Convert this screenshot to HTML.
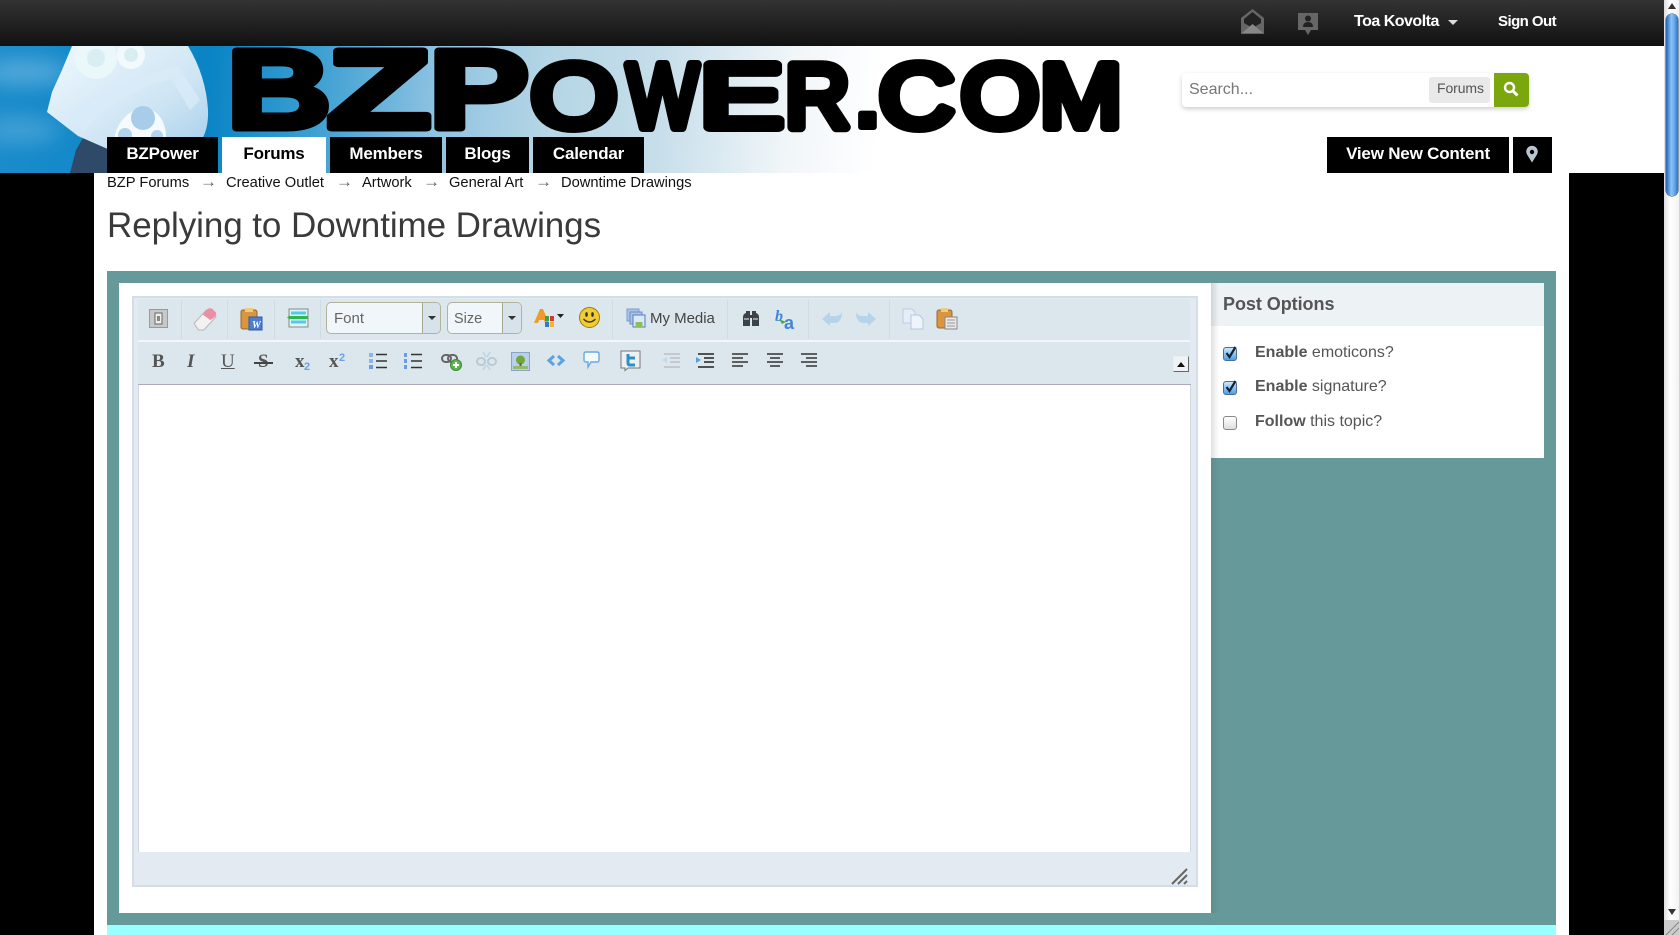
<!DOCTYPE html>
<html><head><meta charset="utf-8"><title>Replying to Downtime Drawings</title>
<style>
html,body{margin:0;padding:0;width:1679px;height:935px;overflow:hidden;background:#fff;font-family:"Liberation Sans",Arial,sans-serif}
.a{position:absolute}
.t{position:absolute;white-space:nowrap}
.tab{position:absolute;top:137px;height:36px;line-height:33px;background:#000;color:#fff;text-align:center;font-size:17px;font-weight:bold;letter-spacing:-.2px}
.sep{position:absolute;top:300px;width:1px;height:39px;background:#d0dbe3}
.ic{position:absolute;overflow:visible}
.cr{position:absolute;top:175px;font-size:14.7px;line-height:17px;color:#111;white-space:nowrap}
.ar{position:absolute;top:173px;font-size:17px;line-height:17px;color:#666;white-space:nowrap}
.fm{position:absolute;font-weight:bold;font-family:"Liberation Serif",serif;color:#555}
.cb{position:absolute;left:1223px;width:14px;height:14px;border-radius:3px;box-sizing:border-box}
.on{background:linear-gradient(#cfe6fb,#4d9ee8);border:1px solid #4a6f96}
.off{background:linear-gradient(#fff,#ddd);border:1px solid #888}
.o{position:absolute;left:1255px;font-size:16px;line-height:20px;color:#555;white-space:nowrap}
</style></head>
<body>
<div class="a" style="left:0;top:0;width:1664px;height:46px;background:linear-gradient(#333,#111)"></div>

<div class="a" style="left:0;top:46px;width:1664px;height:127px;background:#fff"></div>
<svg class="a" style="left:0;top:46px" width="1140" height="127" viewBox="0 46 1140 127">
<defs>
<linearGradient id="bn" gradientUnits="userSpaceOnUse" x1="0" y1="46" x2="880" y2="110"><stop offset="0" stop-color="#1b8ccb"/><stop offset=".24" stop-color="#0a84c5"/><stop offset=".36" stop-color="#3c9fd2"/><stop offset=".5" stop-color="#8fc3e2"/><stop offset=".62" stop-color="#b4d5e5"/><stop offset=".75" stop-color="#c6deea"/><stop offset=".9" stop-color="#f1f6f9"/><stop offset="1" stop-color="#fff"/></linearGradient>
<linearGradient id="hm" x1="0" y1="0" x2="1" y2="1"><stop offset="0" stop-color="#eef8fd"/><stop offset=".6" stop-color="#cfe5f4"/><stop offset="1" stop-color="#a4cdea"/></linearGradient>
<filter id="bl" x="-50%" y="-100%" width="200%" height="300%"><feGaussianBlur stdDeviation="10"/></filter>
</defs>
<rect x="0" y="46" width="1000" height="127" fill="url(#bn)"/>
<ellipse cx="25" cy="72" rx="45" ry="12" fill="#7fc0e6" opacity=".6" filter="url(#bl)"/>
<ellipse cx="20" cy="130" rx="40" ry="12" fill="#6fb8e2" opacity=".5" filter="url(#bl)"/>
<path d="M70 173L76 150 84 136 107 130 125 145 107 173Z" fill="#2f4a68"/>
<path d="M72 46H188Q206 76 208 110 209 135 195 148L160 158 110 150 78 136 47 112 52 92 62 70Z" fill="url(#hm)"/>
<path d="M60 112L84 132 100 112 150 84 172 80 190 110 200 100 178 66 135 78 94 96Z" fill="#d8ebf7" opacity=".8"/>
<circle cx="96" cy="58" r="21" fill="#eaf7fb"/><circle cx="96" cy="58" r="9" fill="#d8eef3"/>
<circle cx="131" cy="55" r="14" fill="#f2fafd"/><circle cx="131" cy="55" r="7" fill="#d8eef3"/>
<path d="M115 135Q120 115 140 108 160 108 165 128 170 150 150 155L125 155Q112 150 115 135Z" fill="#f4fafe"/>
<circle cx="143" cy="118" r="12" fill="#a8cdea"/><circle cx="125" cy="135" r="7" fill="#b4d4ec"/><circle cx="157" cy="136" r="6" fill="#b4d4ec"/>
<g font-family="'Liberation Sans',sans-serif" font-weight="bold" fill="#000" stroke="#000" stroke-width="7" stroke-linejoin="round">
<text x="227" y="128" font-size="112" textLength="104" lengthAdjust="spacingAndGlyphs">B</text>
<text x="327" y="128" font-size="112" textLength="104" lengthAdjust="spacingAndGlyphs">Z</text>
<text x="429" y="128" font-size="112" textLength="100" lengthAdjust="spacingAndGlyphs">P</text>
</g>
<g font-family="'Liberation Sans',sans-serif" fill="#000" stroke="#000" stroke-width="10" stroke-linejoin="round">
<text x="531" y="127" font-size="90" textLength="86" lengthAdjust="spacingAndGlyphs">O</text>
<text x="627" y="127" font-size="90" textLength="71" lengthAdjust="spacingAndGlyphs">W</text>
<text x="700" y="127" font-size="90" textLength="83" lengthAdjust="spacingAndGlyphs">E</text>
<text x="785" y="127" font-size="90" textLength="65" lengthAdjust="spacingAndGlyphs">R</text>
<text x="855" y="127" font-size="90" font-weight="bold" stroke-width="6">.</text>
<text x="879" y="127" font-size="90" textLength="75" lengthAdjust="spacingAndGlyphs">C</text>
<text x="961" y="127" font-size="90" textLength="78" lengthAdjust="spacingAndGlyphs">O</text>
<text x="1040" y="127" font-size="90" textLength="82" lengthAdjust="spacingAndGlyphs">M</text>
</g>
</svg>

<!-- page columns -->
<div class="a" style="left:0;top:173px;width:94px;height:762px;background:#000"></div>
<div class="a" style="left:1569px;top:173px;width:95px;height:762px;background:#000"></div>

<!-- top bar right -->
<svg class="ic" style="left:1240px;top:9px" width="25" height="26" viewBox="0 0 25 26"><path d="M12.5 0L24 9V25H1V9Z" fill="#666"/><path d="M4 10L12.5 3 21 10V14L12.5 19 4 14Z" fill="#222"/><path d="M2 24L12.5 15 23 24Z" fill="#888"/></svg>
<svg class="ic" style="left:1297px;top:12px" width="22" height="24" viewBox="0 0 22 24"><path d="M1 1H21V18H14L11 23 8 18H1Z" fill="#666"/><circle cx="11" cy="6.5" r="3" fill="#222"/><path d="M6 15Q6 10 11 10 16 10 16 15Z" fill="#222"/></svg>
<div class="t" style="left:1354px;top:12px;font-size:16px;line-height:19px;color:#fff;font-weight:bold;letter-spacing:-.5px">Toa Kovolta</div>
<div class="a" style="left:1448px;top:20px;border:5px solid transparent;border-top-color:#ddd;border-bottom:0"></div>
<div class="t" style="left:1498px;top:12px;font-size:15px;line-height:19px;color:#fff;font-weight:bold;letter-spacing:-.55px">Sign Out</div>

<!-- search -->
<div class="a" style="left:1182px;top:73px;width:347px;height:34px;background:#fff;border-radius:4px;box-shadow:0 2px 5px rgba(0,0,0,.2)"></div>
<div class="t" style="left:1189px;top:81px;font-size:16px;line-height:18px;color:#777">Search...</div>
<div class="a" style="left:1429px;top:77px;width:61px;height:26px;background:#e9e9e9;border-radius:3px"></div>
<div class="t" style="left:1437px;top:80px;font-size:14px;line-height:17px;color:#555;letter-spacing:-.1px">Forums</div>
<div class="a" style="left:1494px;top:73px;width:35px;height:34px;background:#7ba60d;border-radius:0 4px 4px 0"></div>
<svg class="ic" style="left:1503px;top:81px" width="16" height="16" viewBox="0 0 16 16"><circle cx="6.5" cy="6.5" r="4.5" fill="none" stroke="#fff" stroke-width="2.4"/><path d="M10 10L14.5 14.5" stroke="#fff" stroke-width="3"/></svg>

<!-- nav -->
<div class="tab" style="left:107px;width:111px">BZPower</div>
<div class="tab" style="left:222px;width:104px;background:#fff;color:#000">Forums</div>
<div class="tab" style="left:330px;width:112px">Members</div>
<div class="tab" style="left:446px;width:83px">Blogs</div>
<div class="tab" style="left:533px;width:111px">Calendar</div>
<div class="tab" style="left:1327px;width:182px">View New Content</div>
<div class="tab" style="left:1513px;width:39px"></div>
<svg class="ic" style="left:1525px;top:146px" width="14" height="17" viewBox="0 0 14 17"><path d="M7 16.5L2 8.5A5.8 5.8 0 1 1 12 8.5Z" fill="#b9c6d0"/><circle cx="7" cy="6" r="2.2" fill="#000"/></svg>

<!-- breadcrumb -->
<div class="cr" style="left:107px">BZP Forums</div>
<div class="ar" style="left:200px">→</div>
<div class="cr" style="left:226px">Creative Outlet</div>
<div class="ar" style="left:336px">→</div>
<div class="cr" style="left:362px">Artwork</div>
<div class="ar" style="left:423px">→</div>
<div class="cr" style="left:449px">General Art</div>
<div class="ar" style="left:535px">→</div>
<div class="cr" style="left:561px">Downtime Drawings</div>

<div class="t" style="left:107px;top:205px;font-size:35px;line-height:42px;color:#3a3a3a;letter-spacing:-.07px">Replying to Downtime Drawings</div>

<!-- teal -->
<div class="a" style="left:107px;top:271px;width:1449px;height:654px;background:#669999"></div>
<div class="a" style="left:107px;top:925px;width:1449px;height:10px;background:#99ffff"></div>
<div class="a" style="left:119px;top:283px;width:1092px;height:630px;background:#fff"></div>
<div class="a" style="left:1211px;top:283px;width:333px;height:175px;background:#fff"></div>
<div class="a" style="left:1211px;top:283px;width:333px;height:43px;background:#edf2f5"></div>
<div class="a" style="left:1211px;top:283px;width:8px;height:175px;background:linear-gradient(90deg,rgba(0,0,0,.12),rgba(0,0,0,0))"></div>
<div class="a" style="left:1211px;top:458px;width:8px;height:455px;background:linear-gradient(90deg,rgba(0,0,0,.08),rgba(0,0,0,0))"></div>

<div class="t" style="left:1223px;top:294px;font-size:18px;line-height:21px;font-weight:bold;color:#555;letter-spacing:-.05px">Post Options</div>
<div class="cb on" style="top:347px"></div>
<div class="cb on" style="top:381px"></div>
<div class="cb off" style="top:416px"></div>
<svg class="ic" style="left:1223px;top:344px" width="16" height="16" viewBox="0 0 16 16"><path d="M3.5 9L6.5 13 12.5 3" fill="none" stroke="#123" stroke-width="2.2"/></svg>
<svg class="ic" style="left:1223px;top:378px" width="16" height="16" viewBox="0 0 16 16"><path d="M3.5 9L6.5 13 12.5 3" fill="none" stroke="#123" stroke-width="2.2"/></svg>
<div class="o" style="top:343px"><b>Enable</b> emoticons?</div>
<div class="o" style="top:377px"><b>Enable</b> signature?</div>
<div class="o" style="top:412px"><b>Follow</b> this topic?</div>

<!-- editor -->
<div class="a" style="left:132px;top:296px;width:1066px;height:591px;background:#e3eaf2;border:0;box-shadow:inset 0 0 0 2px #d3dee8"></div>
<div class="a" style="left:138px;top:299px;width:1052px;height:41px;background:#dce6ed"></div>
<div class="a" style="left:138px;top:340px;width:1052px;height:2px;background:#f2f6f9"></div>
<div class="a" style="left:138px;top:342px;width:1052px;height:42px;background:#dce6ed"></div>
<div class="a" style="left:138px;top:384px;width:1053px;height:1px;background:#aab"></div>
<div class="a" style="left:138px;top:385px;width:1053px;height:467px;background:#fff;box-shadow:inset 1px 0 0 #d0d8e0,inset -1px 0 0 #d0d8e0"></div>
<div class="sep" style="left:181px"></div><div class="sep" style="left:227px"></div><div class="sep" style="left:274px"></div><div class="sep" style="left:320px"></div>
<div class="sep" style="left:612px"></div><div class="sep" style="left:727px"></div><div class="sep" style="left:808px"></div><div class="sep" style="left:889px"></div>

<!-- row 1 icons -->
<svg class="ic" style="left:149px;top:309px" width="19" height="19" viewBox="0 0 19 19"><rect x=".5" y=".5" width="18" height="18" fill="#c8c8c8" stroke="#999"/><rect x="6" y="4" width="7" height="11" fill="#eee" stroke="#666"/><rect x="8" y="7" width="3" height="5" fill="#888"/></svg>
<svg class="ic" style="left:193px;top:307px" width="24" height="24" viewBox="0 0 22 22"><path d="M1 15L12 3 21 9 10 21H5Z" fill="#f2f2f2" stroke="#bbb"/><path d="M12 3Q15 0 18 2L21 5Q22 7 20 9L16 12 9 7Z" fill="#ec8fa5"/></svg>
<svg class="ic" style="left:240px;top:308px" width="23" height="23" viewBox="0 0 23 23"><rect x="1" y="2" width="16" height="19" rx="2" fill="#d9963f" stroke="#98662a"/><rect x="5" y="0" width="8" height="4" fill="#f0cb7a"/><rect x="9" y="9" width="13" height="13" fill="#4d7fd0" stroke="#2f5aa8"/><text x="12" y="20" font-size="10" font-weight="bold" font-style="italic" fill="#fff" font-family="'Liberation Serif',serif">W</text></svg>
<svg class="ic" style="left:287px;top:308px" width="22" height="20" viewBox="0 0 22 20"><rect x="2" y="1" width="19" height="18" fill="#dff4f8" stroke="#7a8d88"/><path d="M4 5H19M4 14H19" stroke="#55c8ee" stroke-width="3"/><rect x="3" y="8" width="18" height="3" fill="#2fb84a"/><path d="M0 9.5L3 7.5V11.5Z" fill="#2fb84a"/></svg>

<div class="a" style="left:326px;top:302px;width:115px;height:32px;box-sizing:border-box;background:#f1f6fa;border:1px solid #b2b39a;border-radius:5px"></div>
<div class="a" style="left:422px;top:303px;width:18px;height:30px;background:#d8e2ea;border-left:1px solid #a7a98f;border-radius:0 4px 4px 0;box-sizing:border-box"></div>
<div class="a" style="left:428px;top:316px;border:4px solid transparent;border-top:4px solid #333;border-bottom:0"></div>
<div class="t" style="left:334px;top:310px;font-size:15px;line-height:18px;color:#666">Font</div>
<div class="a" style="left:447px;top:302px;width:75px;height:32px;box-sizing:border-box;background:#f1f6fa;border:1px solid #b2b39a;border-radius:5px"></div>
<div class="a" style="left:502px;top:303px;width:19px;height:30px;background:#d8e2ea;border-left:1px solid #a7a98f;border-radius:0 4px 4px 0;box-sizing:border-box"></div>
<div class="a" style="left:508px;top:316px;border:4px solid transparent;border-top:4px solid #333;border-bottom:0"></div>
<div class="t" style="left:454px;top:310px;font-size:14.5px;line-height:18px;color:#666">Size</div>

<svg class="ic" style="left:533px;top:308px" width="33" height="22" viewBox="0 0 33 22"><path d="M1 15L7 1H10L16 15H12L11 12H6L5 15Z" fill="#f09a2a"/><rect x="12" y="8" width="4" height="5" fill="#3da33d"/><rect x="17" y="8" width="4" height="5" fill="#d8343a"/><rect x="12" y="14" width="4" height="5" fill="#3574db"/><rect x="17" y="14" width="4" height="5" fill="#efb72a"/><path d="M24 6H31L27.5 10Z" fill="#222"/></svg>
<svg class="ic" style="left:579px;top:307px" width="21" height="21" viewBox="0 0 21 21"><circle cx="10.5" cy="10.5" r="10" fill="#f2cd2e" stroke="#9a7a1a"/><ellipse cx="7.5" cy="7.5" rx="1.3" ry="2.4" fill="#333"/><ellipse cx="13.5" cy="7.5" rx="1.3" ry="2.4" fill="#333"/><path d="M4.5 12Q10.5 18 16.5 12" fill="none" stroke="#333" stroke-width="1.4"/></svg>
<svg class="ic" style="left:626px;top:308px" width="20" height="20" viewBox="0 0 20 20"><rect x="1" y="1" width="12" height="12" fill="#a9c4e8" stroke="#7c9ccc"/><rect x="4" y="4" width="12" height="12" fill="#a9c4e8" stroke="#6c8dc4"/><rect x="7" y="7" width="12" height="12" fill="#dbe8f8" stroke="#4d7ec8"/><rect x="9.5" y="14" width="7" height="5" fill="#8cbf54"/></svg>
<div class="t" style="left:650px;top:310px;font-size:15px;line-height:18px;color:#444;letter-spacing:-.02px">My Media</div>
<svg class="ic" style="left:742px;top:310px" width="18" height="17" viewBox="0 0 18 17"><path d="M1 7Q1 4 4 3V1H8V5H10V1H14V3Q17 4 17 7V16H10V8H8V16H1Z" fill="#3b4248"/><path d="M2 8H7V10H2ZM11 8H16V10H11Z" fill="#999"/></svg>
<svg class="ic" style="left:775px;top:308px" width="22" height="22" viewBox="0 0 22 22"><text x="0" y="13" font-size="16" font-weight="bold" font-style="italic" fill="#3f86d8" font-family="'Liberation Serif',serif">b</text><text x="9" y="21" font-size="18" font-weight="bold" fill="#3f86d8" font-family="'Liberation Sans',sans-serif">a</text><path d="M4 11L11 14 7 16Z" fill="#4aa84a"/></svg>
<svg class="ic" style="left:822px;top:310px" width="20" height="17" viewBox="0 0 20 17"><path d="M0 9L8 2V6H15Q19 5 20 2 20 13 12 13H8V16Z" fill="#b5d4ea"/></svg>
<svg class="ic" style="left:856px;top:310px" width="20" height="17" viewBox="0 0 20 17"><path d="M20 9L12 2V6H5Q1 5 0 2 0 13 8 13H12V16Z" fill="#b5d4ea"/></svg>
<svg class="ic" style="left:902px;top:308px" width="22" height="22" viewBox="0 0 22 22"><path d="M1 1H10L13 4V15H1Z" fill="#e5edf6" stroke="#bccde2"/><path d="M9 7H17L21 11V21H9Z" fill="#eef4fa" stroke="#b4c7e0"/></svg>
<svg class="ic" style="left:936px;top:308px" width="22" height="22" viewBox="0 0 22 22"><rect x="1" y="2" width="15" height="18" rx="2" fill="#d9963f" stroke="#98662a"/><rect x="5" y="0" width="7" height="4" fill="#f0cb7a"/><rect x="9" y="9" width="12" height="12" fill="#e8e8e8" stroke="#888"/><path d="M11 12H19M11 15H19M11 18H19" stroke="#999"/></svg>

<!-- row 2 icons -->
<div class="fm" style="left:152px;top:351px;font-size:19px;line-height:22px">B</div>
<div class="fm" style="left:187px;top:351px;font-size:19px;line-height:22px;font-style:italic">I</div>
<div class="fm" style="left:221px;top:351px;font-size:19px;line-height:22px;font-weight:normal;text-decoration:underline">U</div>
<div class="fm" style="left:258px;top:351px;font-size:19px;line-height:22px">S</div>
<div class="a" style="left:254px;top:362px;width:19px;height:1.5px;background:#444"></div>
<div class="fm" style="left:295px;top:351px;font-size:19px;line-height:22px">x</div>
<div class="t" style="left:304px;top:361px;font-size:11px;line-height:12px;font-weight:bold;color:#6aa3e8">2</div>
<div class="fm" style="left:329px;top:351px;font-size:19px;line-height:22px">x</div>
<div class="t" style="left:339px;top:352px;font-size:11px;line-height:12px;font-weight:bold;color:#6aa3e8">2</div>
<svg class="ic" style="left:368px;top:352px" width="20" height="18" viewBox="0 0 20 18"><rect x="1" y="1" width="4" height="4" fill="#8cb4ea"/><rect x="1" y="7" width="4" height="4" fill="#8cb4ea"/><rect x="1" y="13" width="4" height="4" fill="#6a9ce0"/><path d="M8 2.5H19M8 9H19M8 15.5H19" stroke="#333" stroke-width="1.4"/></svg>
<svg class="ic" style="left:403px;top:352px" width="20" height="18" viewBox="0 0 20 18"><path d="M1 1H4V5H1ZM1 7H4V11H1ZM1 13H4V17H1Z" fill="#6a9ce0"/><path d="M8 2.5H19M8 9H19M8 15.5H19" stroke="#333" stroke-width="1.4"/></svg>
<svg class="ic" style="left:441px;top:351px" width="21" height="20" viewBox="0 0 21 20"><rect x="1" y="4" width="9" height="7" rx="3.5" fill="none" stroke="#666" stroke-width="2"/><rect x="7" y="4" width="9" height="7" rx="3.5" fill="none" stroke="#666" stroke-width="2"/><circle cx="15" cy="14" r="5.5" fill="#5db552" stroke="#3d8a3a"/><path d="M15 11V17M12 14H18" stroke="#fff" stroke-width="2"/></svg>
<svg class="ic" style="left:476px;top:351px" width="21" height="20" viewBox="0 0 21 20"><rect x="1" y="7" width="8" height="7" rx="3.5" fill="none" stroke="#bcc8d2" stroke-width="2"/><rect x="12" y="7" width="8" height="7" rx="3.5" fill="none" stroke="#bcc8d2" stroke-width="2"/><path d="M7 1L10 6M14 1L11 6M7 19L10 14M14 19L11 14" stroke="#b5d4ea" stroke-width="1.3"/></svg>
<svg class="ic" style="left:511px;top:352px" width="19" height="19" viewBox="0 0 19 19"><rect x=".5" y=".5" width="18" height="18" fill="#b8d0ea" stroke="#8aa3c6"/><circle cx="9.5" cy="8" r="4.5" fill="#6fa83a"/><rect x="8.5" y="11" width="2" height="4" fill="#7a5a2a"/><rect x="2" y="14" width="15" height="3" fill="#93b96a"/></svg>
<svg class="ic" style="left:547px;top:354px" width="18" height="13" viewBox="0 0 18 13"><path d="M7 2L2 6.5 7 11M11 2L16 6.5 11 11" fill="none" stroke="#5aa2e4" stroke-width="3"/></svg>
<svg class="ic" style="left:583px;top:351px" width="17" height="17" viewBox="0 0 17 17"><path d="M3 1H14Q16 1 16 3V9Q16 11 14 11H8L5 16V11H3Q1 11 1 9V3Q1 1 3 1Z" fill="#f4f9fd" stroke="#6aa8e0" stroke-width="1.4"/></svg>
<svg class="ic" style="left:620px;top:350px" width="21" height="21" viewBox="0 0 21 21"><path d="M1 1H20V18H8L5 20.5V18H1Z" fill="#eef0f0" stroke="#777"/><path d="M8 4V13Q8 15 10 15H15M8 8H15" fill="none" stroke="#2a8fc8" stroke-width="3"/></svg>
<svg class="ic" style="left:662px;top:353px" width="18" height="16" viewBox="0 0 18 16"><path d="M2 1H18M8 5H18M8 9H18M2 14H18" stroke="#b9c1c7" stroke-width="1.6"/><path d="M0 7L5 4V10Z" fill="#c5d8e8"/></svg>
<svg class="ic" style="left:696px;top:353px" width="18" height="16" viewBox="0 0 18 16"><path d="M2 1H18M8 5H18M8 9H18M2 14H18" stroke="#222" stroke-width="1.6"/><path d="M5 7L0 4V10Z" fill="#5a9be0"/></svg>
<svg class="ic" style="left:731px;top:353px" width="18" height="16" viewBox="0 0 18 16"><path d="M1 1H17M1 5H12M1 9H17M1 13H12" stroke="#333" stroke-width="1.5"/></svg>
<svg class="ic" style="left:766px;top:353px" width="18" height="16" viewBox="0 0 18 16"><path d="M1 1H17M4 5H14M1 9H17M4 13H14" stroke="#333" stroke-width="1.5"/></svg>
<svg class="ic" style="left:800px;top:353px" width="18" height="16" viewBox="0 0 18 16"><path d="M1 1H17M6 5H17M1 9H17M6 13H17" stroke="#333" stroke-width="1.5"/></svg>

<div class="a" style="left:1173px;top:356px;width:16px;height:16px;box-sizing:border-box;background:#f0f3f5;border:1px solid;border-color:#eee #666 #666 #eee"></div>
<div class="a" style="left:1177px;top:362px;border:4px solid transparent;border-bottom:5px solid #111;border-top:0"></div>
<svg class="ic" style="left:1172px;top:868px" width="17" height="17" viewBox="0 0 17 17"><path d="M0 16L15 1M6 16L15 7M12 16L15 13" stroke="#666" stroke-width="2"/></svg>

<!-- scrollbar -->
<div class="a" style="left:1664px;top:0;width:15px;height:935px;background:linear-gradient(90deg,#ddd,#fff 40%,#f2f2f2)"></div>
<div class="a" style="left:1666px;top:14px;width:12px;height:182px;border-radius:6px;background:linear-gradient(90deg,#1e62bc,#8cc4f4 45%,#5aa2ea 75%,#2a6fc8);box-shadow:0 0 0 .5px #345"></div>
<div class="a" style="left:1668px;top:3px;border:4px solid transparent;border-bottom:6px solid #333;border-top:0"></div>
<div class="a" style="left:1668px;top:909px;border:4px solid transparent;border-top:6px solid #333;border-bottom:0"></div>
<div class="a" style="left:1664px;top:920px;width:15px;height:15px;background:#ccc"></div>
<svg class="ic" style="left:1664px;top:920px" width="15" height="15" viewBox="0 0 15 15"><path d="M2 15L15 2M8 15L15 8" stroke="#888"/></svg>
</body></html>
